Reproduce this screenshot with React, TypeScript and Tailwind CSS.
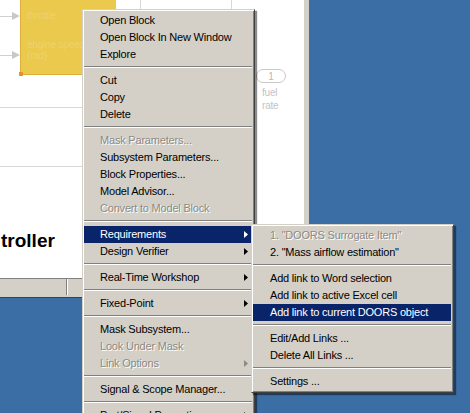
import React from "react";

type Item =
  | { sep: true }
  | { label: string; disabled?: boolean; active?: boolean; sub?: boolean; sep?: false };

const mainMenu: Item[] = [
  { label: "Open Block" },
  { label: "Open Block In New Window" },
  { label: "Explore" },
  { sep: true },
  { label: "Cut" },
  { label: "Copy" },
  { label: "Delete" },
  { sep: true },
  { label: "Mask Parameters...", disabled: true },
  { label: "Subsystem Parameters..." },
  { label: "Block Properties..." },
  { label: "Model Advisor..." },
  { label: "Convert to Model Block", disabled: true },
  { sep: true },
  { label: "Requirements", active: true, sub: true },
  { label: "Design Verifier", sub: true },
  { sep: true },
  { label: "Real-Time Workshop", sub: true },
  { sep: true },
  { label: "Fixed-Point", sub: true },
  { sep: true },
  { label: "Mask Subsystem..." },
  { label: "Look Under Mask", disabled: true },
  { label: "Link Options", disabled: true, sub: true },
  { sep: true },
  { label: "Signal & Scope Manager..." },
  { sep: true },
  { label: "Port/Signal Properties", sub: true },
];

const reqMenu: Item[] = [
  { label: '1. "DOORS Surrogate Item"', disabled: true },
  { label: '2. "Mass airflow estimation"' },
  { sep: true },
  { label: "Add link to Word selection" },
  { label: "Add link to active Excel cell" },
  { label: "Add link to current DOORS object", active: true },
  { sep: true },
  { label: "Edit/Add Links ..." },
  { label: "Delete All Links ..." },
  { sep: true },
  { label: "Settings ..." },
];

function Arrow({ color }: { color: string }) {
  return (
    <svg width="4" height="7" viewBox="0 0 4 7" className="shrink-0">
      <path d="M0 0L4 3.5L0 7Z" fill={color} />
    </svg>
  );
}

function MenuRows({ items, pl }: { items: Item[]; pl: string }) {
  return (
    <>
      {items.map((it, i) =>
        it.sep ? (
          <div key={i} className="h-[9px] pt-[3px]">
            <div className="h-px bg-[#808080]" />
            <div className="h-px bg-white" />
          </div>
        ) : (
          <div
            key={i}
            className={`flex h-[17px] items-center justify-between pr-[4px] ${pl} ${
              it.active ? "bg-[#0a246a] text-white" : it.disabled ? "text-[#8d8a84] [text-shadow:1px_1px_0_#fff]" : "text-black"
            }`}
          >
            <span className="whitespace-nowrap">{it.label}</span>
            {it.sub && <Arrow color={it.active ? "#fff" : it.disabled ? "#8d8a84" : "#000"} />}
          </div>
        )
      )}
    </>
  );
}

export default function App() {
  return (
    <div
      className="relative h-[413px] w-[470px] overflow-hidden bg-[#3a6ea5] text-[11px] tracking-[-0.2px]"
      style={{ fontFamily: '"Liberation Sans", Arial, sans-serif' }}
    >
      {/* Simulink window */}
      <div className="flex h-[298px] w-[309px] flex-col border-r-[5px] border-[#d4d0c8] shadow-[inset_-1px_0_0_#404040]">
        <div className="relative flex-1 bg-white">
          {/* inputs */}
          <div className="absolute left-0 top-[16px] h-px w-[14px] bg-[#d0d0d0]" />
          <div className="absolute left-[12px] top-[12px] h-0 w-0 border-y-[4px] border-l-[8px] border-y-transparent border-l-[#c8c8c8]" />
          <div className="absolute left-0 top-[55px] h-px w-[14px] bg-[#d0d0d0]" />
          <div className="absolute left-[12px] top-[51px] h-0 w-0 border-y-[4px] border-l-[8px] border-y-transparent border-l-[#c8c8c8]" />
          {/* subsystem block */}
          <div className="absolute left-[20px] top-[-2px] h-[77px] w-[96px] border-b border-l border-[#dcae3c] bg-[#eac94c] text-[10px] leading-[11px] text-[#efd26e]">
            <div className="pl-[6px] pt-[12px]">throttle</div>
            <div className="pl-[6px] pt-[18px]">engine speed</div>
            <div className="pl-[6px]">(rad)</div>
          </div>
          <div className="absolute left-[19px] top-[72px] h-[4px] w-[4px] bg-[#e8932a]" />
          {/* wires */}
          <div className="absolute left-0 top-[107px] h-px w-[84px] bg-[#d8d8d8]" />
          <div className="absolute left-0 top-[166px] h-px w-[84px] bg-[#d8d8d8]" />
          <div className="absolute left-[140px] top-0 h-[10px] w-px bg-[#d8d8d8]" />
          <div className="absolute left-[231px] top-0 h-[10px] w-px bg-[#d8d8d8]" />
          {/* outport */}
          <div className="absolute left-[256px] top-[69px] flex h-[14px] w-[30px] items-center justify-center rounded-full border border-[#c8c8c8] text-[10px] text-[#b8b8b8]">
            1
          </div>
          <div className="absolute left-[262px] top-[86px] text-[10px] leading-[13px] text-[#c4c4c4]">
            fuel
            <br />
            rate
          </div>
          <div className="absolute left-[1px] top-[227px] text-[19px] font-bold tracking-normal text-black">troller</div>
        </div>
        {/* status bar */}
        <div className="flex h-[17px] border-t border-[#808080] bg-[#d4d0c8]">
          <div className="w-[67px] border-r border-[#808080] shadow-[1px_0_0_#fff]" />
          <div className="flex-1" />
        </div>
        <div className="h-[3px] bg-[#d4d0c8] shadow-[inset_0_-1px_0_#404040]" />
      </div>

      {/* context menu */}
      <div className="absolute left-[82px] top-[9px] w-[173px] border border-[#d4d0c8] border-b-[#404040] border-r-[#404040] bg-[#d4d0c8] pb-[2px] pl-px pr-[2px] pt-[2px] shadow-[inset_1px_1px_0_#fff,inset_-1px_-1px_0_#808080,2px_2px_1px_rgba(0,0,0,0.45)]">
        <MenuRows items={mainMenu} pl="pl-[16px]" />
      </div>

      {/* requirements submenu */}
      <div className="absolute left-[251px] top-[224px] w-[203px] border border-[#d4d0c8] border-b-[#404040] border-r-[#404040] bg-[#d4d0c8] pb-[2px] pl-px pr-[2px] pt-[2px] shadow-[inset_1px_1px_0_#fff,inset_-1px_-1px_0_#808080,2px_2px_1px_rgba(0,0,0,0.45)]">
        <MenuRows items={reqMenu} pl="pl-[17px]" />
      </div>
    </div>
  );
}
